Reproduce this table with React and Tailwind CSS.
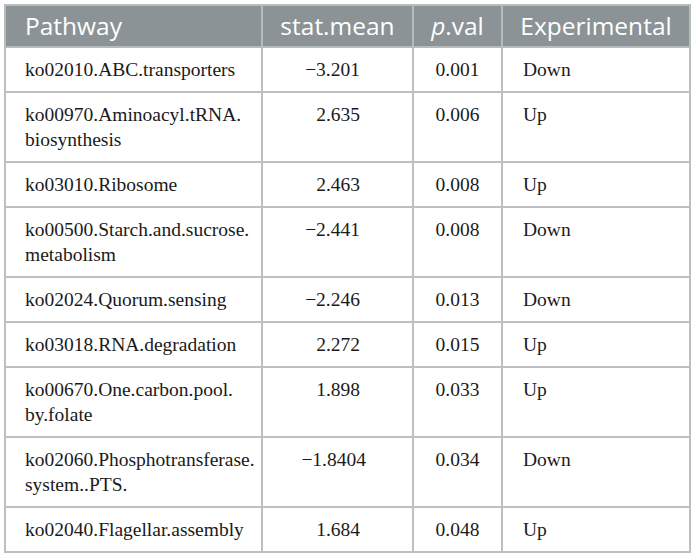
const rows = [
  ["ko02010.ABC.transporters", "", "\u22123.201", "0.001", "Down"],
  ["ko00970.Aminoacyl.tRNA.", "biosynthesis", "2.635", "0.006", "Up"],
  ["ko03010.Ribosome", "", "2.463", "0.008", "Up"],
  ["ko00500.Starch.and.sucrose.", "metabolism", "\u22122.441", "0.008", "Down"],
  ["ko02024.Quorum.sensing", "", "\u22122.246", "0.013", "Down"],
  ["ko03018.RNA.degradation", "", "2.272", "0.015", "Up"],
  ["ko00670.One.carbon.pool.", "by.folate", "1.898", "0.033", "Up"],
  ["ko02060.Phosphotransferase.", "system..PTS.", "\u22121.8404", "0.034", "Down"],
  ["ko02040.Flagellar.assembly", "", "1.684", "0.048", "Up"],
];

export default function App() {
  return (
    <div className="w-[694px] h-[557px] bg-white pl-[4px] pt-[4px]">
      <table className="border-collapse w-[685px] table-fixed font-['Liberation_Serif',serif] text-[19.5px] leading-[25px] text-[#1a1a1a]">
        <colgroup>
          <col className="w-[257px]" />
          <col className="w-[151px]" />
          <col className="w-[89px]" />
          <col className="w-[188px]" />
        </colgroup>
        <thead>
          <tr className="bg-[#8b9396] text-white font-['Open_Sans',sans-serif] text-[24.5px] leading-[30px]">
            <th className="h-[42px] p-0 border-2 border-[#b6bbbc] font-normal text-left pl-[19px] align-middle">Pathway</th>
            <th className="h-[42px] p-0 border-2 border-[#b6bbbc] font-normal text-center align-middle">stat.mean</th>
            <th className="h-[42px] p-0 border-2 border-[#b6bbbc] font-normal text-center align-middle"><i>p</i>.val</th>
            <th className="h-[42px] p-0 border-2 border-[#b6bbbc] font-normal text-center align-middle">Experimental</th>
          </tr>
        </thead>
        <tbody>
          {rows.map((r, i) => (
            <tr key={i}>
              <td className="border-2 border-[#bcc0c0] align-top pt-[9px] pb-[9px] pl-[19px]">
                <div>{r[0]}</div>
                {r[1] ? <div>{r[1]}</div> : null}
              </td>
              <td className={"border-2 border-[#bcc0c0] align-top pt-[9px] text-right " + (r[2] === "\u22121.8404" ? "pr-[46px]" : "pr-[52px]")}>{r[2]}</td>
              <td className="border-2 border-[#bcc0c0] align-top pt-[9px] text-center">{r[3]}</td>
              <td className="border-2 border-[#bcc0c0] align-top pt-[9px] pl-[20px]">{r[4]}</td>
            </tr>
          ))}
        </tbody>
      </table>
    </div>
  );
}
